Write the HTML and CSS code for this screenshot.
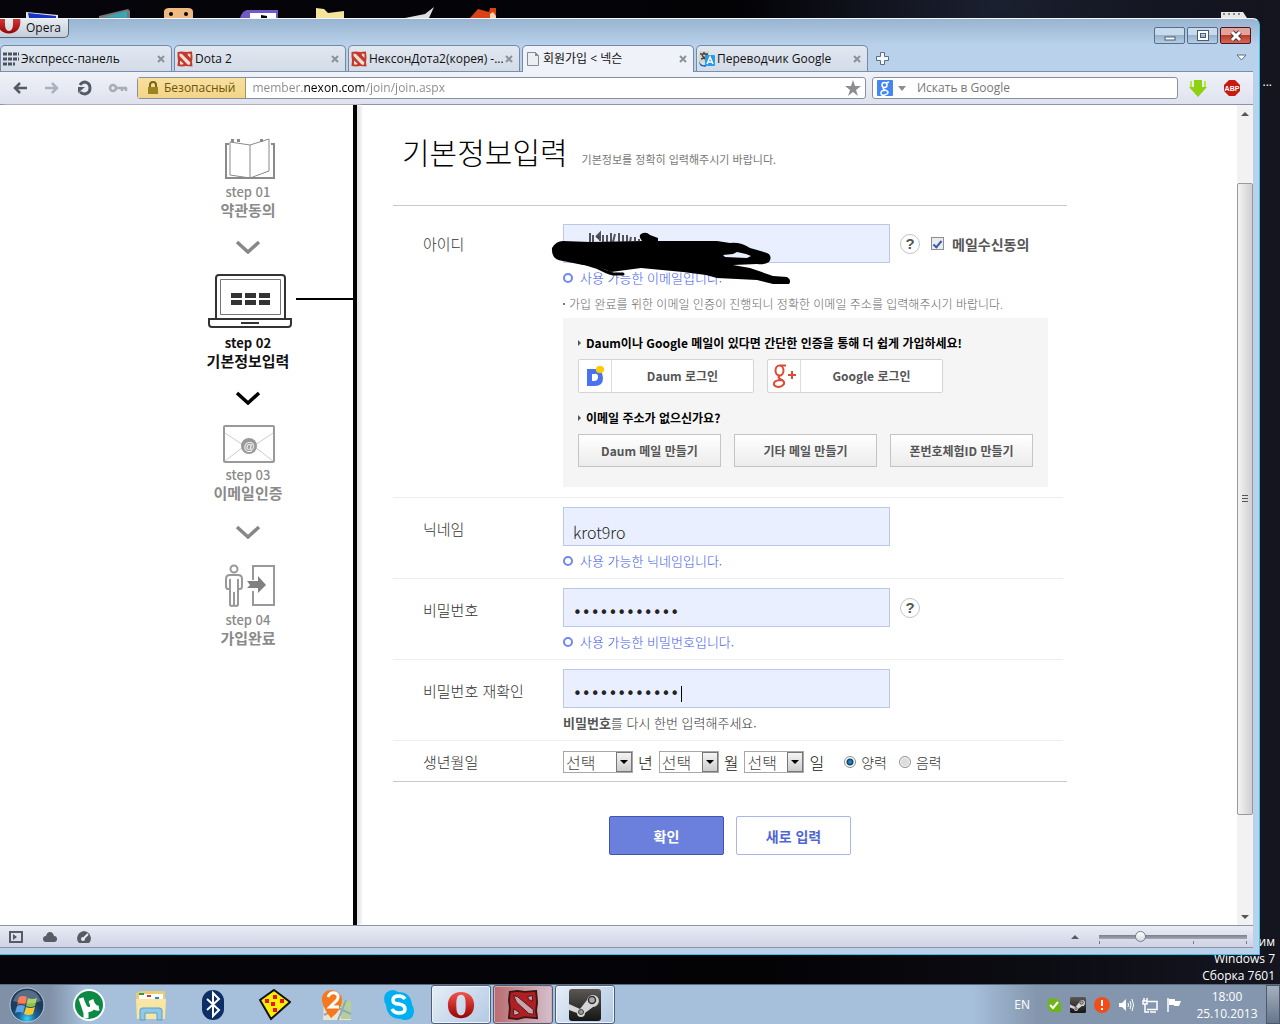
FILE: index.html
```html
<!DOCTYPE html>
<html lang="ko">
<head>
  <meta charset="UTF-8">
  <title>회원가입 &lt; 넥슨</title>
  <link rel="stylesheet" href="styles.css">
</head>
<body>

  <!-- shared icons -->
  <svg class="defs" aria-hidden="true">
    <symbol id="i-dota" viewBox="0 0 32 32">
      <path d="M1 2l8-1 9 1 12-1 1 12-1 9 1 9-13-1-8 1-9-1 1-11-1-8z" fill="#c43a2a"/>
      <path d="M5 5l5 1 17 17-2 5-4-1L5 10zM21 5l6 1v8l-5-5zM6 19l7 6-1 2H6z" fill="#f0dcd8"/>
    </symbol>
    <symbol id="i-dota-dark" viewBox="0 0 32 32">
      <path d="M2 2l8-1 8 1 12-1 1 12-1 9 1 8-13-1-8 2-9-1 1-11-1-8z" fill="#b01f22" stroke="#3c1517" stroke-width="2"/>
      <path d="M6 6l4 1 17 14v5l-5-1L9 13zM21 7l5-1v6l-4-2zM6 20l6 4-1 2-5 1z" fill="#c9a3ad" stroke="#4a1719"/>
    </symbol>
    <symbol id="i-opera" viewBox="0 0 32 32">
      <path fill="url(#red)" fill-rule="evenodd" d="M16 2C7 2 2 8 2 16s5 14 14 14 14-6 14-14S25 2 16 2zm0 3c4 0 5 4 5 11s-1 11-5 11-5-4-5-11 1-11 5-11z"/>
    </symbol>
    <symbol id="i-steam" viewBox="0 0 32 32">
      <rect width="32" height="32" rx="3" fill="url(#dark)"/>
      <path d="M0 15l11 5 7-9a6 6 0 1 1 6 7l-8 6a4 4 0 0 1-8 0L0 21z" fill="#d5d5d5"/>
      <circle cx="23" cy="11" r="3.500" fill="#aaa" stroke="#333" stroke-width="1.500"/>
      <circle cx="12" cy="23" r="2.500" fill="#999" stroke="#444"/>
    </symbol>
    <symbol id="i-close" viewBox="0 0 8 8"><path d="M1 1l6 6M7 1L1 7" stroke="#8a929e" stroke-width="2"/></symbol>
    <symbol id="i-chevron" viewBox="0 0 26 14"><path d="M2 2l11 10L24 2" fill="none" stroke="currentColor" stroke-width="3.500"/></symbol>
    <linearGradient id="red" x2="0" y2="1"><stop stop-color="#f4544c"/><stop offset="1" stop-color="#980404"/></linearGradient>
    <linearGradient id="dark" x2="0" y2="1"><stop stop-color="#5b5753"/><stop offset="1" stop-color="#151515"/></linearGradient>
    <radialGradient id="orb" cx=".5" cy=".9"><stop stop-color="#37d5ff"/><stop offset=".5" stop-color="#1c6299"/><stop offset="1" stop-color="#1e3c5c"/></radialGradient>
  </svg>

  <!-- desktop icons above the window -->
  <div class="desktop-top">
    <svg width="600" height="18" viewBox="0 0 600 18">
      <path d="M26 12l32 3v3H26z" fill="#e6e6e6"/><path d="M28 13l28 3v2H29z" fill="#1232c8"/>
      <path d="M99 16l29-7 2 2v7H99z" fill="#777"/><path d="M104 17l23-6v7z" fill="#35a9b8"/>
      <path d="M164 18v-7q1-3 5-3h19q5 0 5 4v6z" fill="#efb981"/><circle cx="171" cy="14" r="2"/><circle cx="186" cy="14" r="2"/>
      <path d="M240 18q2-7 7-8h31v8z" fill="#7459c4"/><path d="M250 13h26v5h-26z" fill="#fff"/><path d="M261 15l6 1v2h-6z"/>
      <path d="M316 8l8 1 4 4 16-2v7h-28z" fill="#f5e59a"/>
      <path d="M405 18l20-4 9-7-5 11z" fill="#ddd"/>
      <path d="M470 18l8-9 11 3 1-4h6v10z" fill="#d94316"/><path d="M490 14l3-2 3 4v2h-6z" fill="#f3d2b0"/>
    </svg>
    <svg width="28" height="18" viewBox="0 0 28 18"><path d="M1 12h22l4 6H1z" fill="#e7e7e7"/><path d="M3 14h20" stroke="#888" stroke-width="2" stroke-dasharray="2 3"/></svg>
  </div>
  <span class="desktop-label">...</span>
  <p class="watermark">им<br>Windows 7<br>Сборка 7601</p>

  <!-- browser window -->
  <div class="window">
    <div class="titlebar">
      <button class="opera-menu"><svg width="26" height="26"><use href="#i-opera"/></svg>Opera</button>
      <div class="win-buttons">
        <button aria-label="Minimize"><svg width="12" height="12"><rect x="1" y="7" width="10" height="3" fill="#fff" stroke="#4a5a70"/></svg></button>
        <button aria-label="Restore"><svg width="12" height="12"><path d="M2 2h8v7H2z" fill="none" stroke="#4a5a70" stroke-width="4"/><path d="M2 2h8v7H2z" fill="none" stroke="#fff" stroke-width="2"/></svg></button>
        <button class="win-close" aria-label="Close"><svg width="12" height="12"><path d="M2 2l8 8M10 2l-8 8" stroke="#5a3038" stroke-width="5"/><path d="M2 2l8 8M10 2l-8 8" stroke="#fff" stroke-width="3"/></svg></button>
      </div>
    </div>

    <div class="tabs">
      <div class="tab">
        <svg width="16" height="16"><path d="M0 3h16M0 8h16M0 13h12" stroke="#4b5260" stroke-width="3" stroke-dasharray="4 1"/></svg>
        <span>Экспресс-панель</span>
        <button aria-label="Close tab"><svg width="8" height="8"><use href="#i-close"/></svg></button>
      </div>
      <div class="tab">
        <svg width="16" height="16"><use href="#i-dota"/></svg>
        <span>Dota 2</span>
        <button aria-label="Close tab"><svg width="8" height="8"><use href="#i-close"/></svg></button>
      </div>
      <div class="tab">
        <svg width="16" height="16"><use href="#i-dota"/></svg>
        <span>НексонДота2(корея) -...</span>
        <button aria-label="Close tab"><svg width="8" height="8"><use href="#i-close"/></svg></button>
      </div>
      <div class="tab active">
        <svg width="16" height="16"><path d="M2.500 1.500h8l3 3v10h-11z" fill="#eceef2" stroke="#858c98"/><path d="M10 1v4h4" fill="#858c98"/></svg>
        <span>회원가입 &lt; 넥슨</span>
        <button aria-label="Close tab"><svg width="8" height="8"><use href="#i-close"/></svg></button>
      </div>
      <div class="tab">
        <svg width="16" height="16"><rect width="10" height="11" rx="1" fill="#d7d7c9"/><path d="M1 3h8M5 1v2M2 8q5-1 6-5M3 4q2 4 5 5" fill="none" stroke="#444" stroke-width="1.500"/><rect x="6" y="4" width="10" height="11" rx="1" fill="#2b9be6"/><path d="M8 13l3-7 3 7M9 11h4" fill="none" stroke="#fff" stroke-width="1.500"/><path d="M0 9q1 6 6 5l1 2-5-1q-2-2-2-6" fill="#1457b5"/></svg>
        <span>Переводчик Google</span>
        <button aria-label="Close tab"><svg width="8" height="8"><use href="#i-close"/></svg></button>
      </div>
      <button class="new-tab" aria-label="New tab"><svg width="13" height="13"><path d="M4.500.500h4v4h4v4h-4v4h-4v-4h-4v-4h4z" fill="#f4f8fc" stroke="#5d6c80"/></svg></button>
      <button class="tab-list" aria-label="Tabs"><svg width="11" height="8"><path d="M1 1h9L5.500 6z" fill="#fff" stroke="#5d6c80"/></svg></button>
    </div>

    <div class="toolbar">
      <nav>
        <button aria-label="Back"><svg width="16" height="16"><path d="M15 8H3M8 3L3 8l5 5" fill="none" stroke="#555b66" stroke-width="2.500"/></svg></button>
        <button aria-label="Forward"><svg width="16" height="16"><path d="M1 8h12M8 3l5 5-5 5" fill="none" stroke="#adb1bc" stroke-width="2.500"/></svg></button>
        <button aria-label="Reload"><svg width="16" height="16"><path d="M4 5q2-3 5-3 5 1 5 6t-5 6q-3 0-5-2" fill="none" stroke="#555b66" stroke-width="3"/><path d="M2 13V7h7z" fill="#555b66"/></svg></button>
        <button aria-label="Password"><svg width="20" height="16"><circle cx="5" cy="8" r="3" fill="none" stroke="#a8acb8" stroke-width="2.500"/><path d="M8 8h11M14 8v3M18 8v3" stroke="#a8acb8" stroke-width="2.500"/></svg></button>
      </nav>
      <div class="address">
        <button class="secure"><svg width="10" height="14"><path d="M2 6V4q0-3 3-3t3 3v2" fill="none" stroke="#776514" stroke-width="2"/><rect y="6" width="10" height="7" fill="#9b8420"/></svg>Безопасный</button>
        <input class="url" type="text" value="member.nexon.com/join/join.aspx" aria-label="Address">
        <button class="star" aria-label="Bookmark"><svg width="16" height="16"><path d="M8 0l2 6h6l-5 4 2 6-5-4-5 4 2-6-5-4h6z" fill="#8b8d93"/></svg></button>
      </div>
      <div class="search">
        <svg width="16" height="16"><rect width="16" height="16" rx="1" fill="#4285f4"/><g fill="none" stroke="#fff" stroke-width="1.500"><circle cx="7.500" cy="5" r="2.500"/><path d="M9 3l3-1M7 8q-2 1 1 2 3 1 3 2.500T7.500 15 4 13t4-2.500"/></g></svg>
        <svg width="8" height="5"><path d="M0 0h8L4 5z" fill="#8b8d93"/></svg>
        <input type="text" placeholder="Искать в Google" aria-label="Search">
      </div>
      <button class="ext" aria-label="Download"><svg width="18" height="18"><path d="M5 1h8v7h5l-9 10-9-10h5z" fill="#8fd010"/><path d="M2 2v6M16 2v6" stroke="#b5ea3c" stroke-width="2"/></svg></button>
      <button class="ext" aria-label="Adblock"><svg width="16" height="16"><path d="M5 0h6l5 5v6l-5 5H5l-5-5V5z" fill="#c81a10"/><text x="8" y="11" class="abp">ABP</text></svg></button>
    </div>

    <div class="view">
      <aside class="steps">
        <div class="step">
          <svg width="56" height="42" viewBox="-4 0 56 42"><g fill="none" stroke="#8a8a8a"><path d="M5 6H2v34h48V6h-3" stroke-width="2"/><path d="M6 4l20 3 19-6v32l-19 7-20-3zM26 7v33"/></g><path d="M7 1h3v3H7zM13 1h3v3h-3zM36 1h3v3h-3z" fill="#8a8a8a"/></svg>
          <span>step 01</span><strong>약관동의</strong>
        </div>
        <svg class="arrow" width="26" height="14"><use href="#i-chevron"/></svg>
        <div class="step current">
          <div class="step-link">
            <svg width="88" height="57" viewBox="0 0 88 57"><g fill="none" stroke="#333" stroke-width="2"><path d="M12 45V4q0-3 3-3h63q3 0 3 3v41M5 45h82v5q0 3-3 3H8q-3 0-3-3z"/><path d="M37 49h18"/><path d="M16.500 5.500h60v35h-60z" stroke-width="1" stroke="#777"/></g><path d="M27 19h11v5H27zM41 19h11v5H41zM55 19h11v5H55zM27 26h11v5H27zM41 26h11v5H41zM55 26h11v5H55z" fill="#333"/></svg>
          </div>
          <span>step 02</span><strong>기본정보입력</strong>
        </div>
        <svg class="arrow current" width="26" height="14"><use href="#i-chevron"/></svg>
        <div class="step">
          <svg width="54" height="38" viewBox="-2 0 54 38"><rect x="1" y="1" width="50" height="36" rx="1" fill="none" stroke="#999" stroke-width="2"/><path d="M2 8l24 16L50 8M2 36l18-14M50 36L32 22" fill="none" stroke="#ccc"/><circle cx="26" cy="21" r="8" fill="#999"/><text x="26" y="25" class="at">@</text></svg>
          <span>step 03</span><strong>이메일인증</strong>
        </div>
        <svg class="arrow" width="26" height="16"><use href="#i-chevron" y="2" height="14"/></svg>
        <div class="step">
          <svg width="56" height="49" viewBox="-4 0 56 49"><g fill="none" stroke="#999" stroke-width="2"><circle cx="10" cy="10" r="3.500"/><path d="M6 30H4q-2 0-2-3v-7q0-4 4-4h8q4 0 4 4v7q0 3-2 3h-2M6 20v26q2 2 4 0V33v13q2 2 4 0V20"/><path d="M29 21V7h21v39H29V32"/></g><path d="M23 22h11v-5l8 9-8 8v-5H23l3-3z" fill="#808080"/></svg>
          <span>step 04</span><strong>가입완료</strong>
        </div>
      </aside>

      <main>
        <header>
          <h1>기본정보입력</h1>
          <p>기본정보를 정확히 입력해주시기 바랍니다.</p>
        </header>

        <form class="join">
          <div class="rows">
            <div class="row first">
              <label class="name" for="userid">아이디</label>
              <div class="field">
                <div class="line">
                  <input class="text" type="text" id="userid">
                  <button type="button" class="help">?</button>
                  <label class="agree"><input type="checkbox" checked>메일수신동의</label>
                </div>
                <p class="ok">사용 가능한 이메일입니다.</p>
                <p class="note">가입 완료를 위한 이메일 인증이 진행되니 정확한 이메일 주소를 입력해주시기 바랍니다.</p>
                <svg class="scribble" width="240" height="56" viewBox="0 0 240 56">
                  <path d="M1 16Q5 9 12 9L39 10 91 9Q87 4 90 2 95-1 99 3L107 6V9H166L179 11Q190 10 199 16L216 21Q222 24 218 30 214 33 206 32L182 33 199 36 222 44 236 45Q241 48 238 52L222 52 206 48 166 46 155 43 132 40 90 36 60 40 45 34 32 33 12 29Q0 28 1 16z"/>
                  <path d="M29 30l16 5 11 5 6 2h10" fill="none" stroke="#000" stroke-width="3" stroke-linecap="round"/>
                  <path d="M172 23l10-1 4-2 9 2 5 2-4 2-22-1z" fill="#e9effe"/>
                  <path d="M39 1v9M42 3v7M45 5l4-4v8M52 3v7M56 3v7M60 1v9M64 2l-2 8M68 1v9M72 3v7M76 3v7M80 5l-1 5M84 5v5M88 7v3" stroke="#222" stroke-width="2" opacity=".75"/>
                </svg>
                <div class="panel">
                  <h2>Daum이나 Google 메일이 있다면 간단한 인증을 통해 더 쉽게 가입하세요!</h2>
                  <div class="buttons">
                    <button type="button" class="social"><i><svg width="18" height="22" viewBox="0 0 18 22"><path fill="#4a72f0" fill-rule="evenodd" d="M1 4h8q8 1 8 9t-8 8H1zm5 5v7h2q4 0 4-4t-4-3z"/><path d="M12 1h4l2 2v3l-2 2h-4l-2-2V3z" fill="#fc0"/></svg></i><span>Daum 로그인</span></button>
                    <button type="button" class="social"><i><svg width="24" height="24" viewBox="0 0 24 24"><g fill="none" stroke="#dc4a38" stroke-width="2"><ellipse cx="7.500" cy="6.500" rx="4" ry="5"/><path d="M8 1.500h6M8 12q-3 1 0 3 5 2 4 5-2 3-6 3-5-1-4-4 1-3 8-3M16 11h8M20 7v8"/></g></svg></i><span>Google 로그인</span></button>
                  </div>
                  <h2>이메일 주소가 없으신가요?</h2>
                  <div class="buttons">
                    <button type="button" class="make">Daum 메일 만들기</button>
                    <button type="button" class="make">기타 메일 만들기</button>
                    <button type="button" class="make">폰번호체험ID 만들기</button>
                  </div>
                </div>
              </div>
            </div>

            <div class="row">
              <label class="name" for="nick">닉네임</label>
              <div class="field">
                <input class="text" type="text" id="nick" value="krot9ro">
                <p class="ok">사용 가능한 닉네임입니다.</p>
              </div>
            </div>

            <div class="row">
              <label class="name" for="pw">비밀번호</label>
              <div class="field">
                <div class="line">
                  <input class="text" type="password" id="pw" value="123456789012">
                  <button type="button" class="help">?</button>
                </div>
                <p class="ok">사용 가능한 비밀번호입니다.</p>
              </div>
            </div>

            <div class="row">
              <label class="name" for="pw2">비밀번호 재확인</label>
              <div class="field">
                <input class="text" type="password" id="pw2" value="123456789012">
                <span class="caret"></span>
                <p class="hint"><b>비밀번호</b>를 다시 한번 입력해주세요.</p>
              </div>
            </div>

            <div class="row birth">
              <span class="name">생년월일</span>
              <div class="line">
                <span class="select year"><select id="year"><option>선택</option></select></span><label for="year">년</label>
                <span class="select"><select id="month"><option>선택</option></select></span><label for="month">월</label>
                <span class="select"><select id="day"><option>선택</option></select></span><label for="day">일</label>
                <label class="cal"><input type="radio" name="cal" checked>양력</label>
                <label class="cal"><input type="radio" name="cal">음력</label>
              </div>
            </div>
          </div>

          <div class="actions">
            <button type="submit" class="confirm">확인</button>
            <button type="reset" class="reset">새로 입력</button>
          </div>
        </form>
      </main>

      <div class="scrollbar">
        <button aria-label="Up"><svg width="8" height="4"><path d="M4 0l4 4H0z" fill="#555"/></svg></button>
        <div class="track"><div class="thumb"></div></div>
        <button aria-label="Down"><svg width="8" height="4"><path d="M0 0h8L4 4z" fill="#555"/></svg></button>
      </div>
    </div>

    <div class="statusbar">
      <button aria-label="Panels"><svg width="14" height="12"><rect x="1" y="1" width="12" height="10" fill="none" stroke="#565b66" stroke-width="2"/><path d="M4 3l4 3-4 3z" fill="#565b66"/></svg></button>
      <button aria-label="Link"><svg width="14" height="12"><path d="M3 11q-3 0-3-3t3-3q1-4 4-4t4 4q3 0 3 3t-3 3z" fill="#565b66"/></svg></button>
      <button aria-label="Turbo"><svg width="14" height="12"><path d="M2 12q-2-2-2-5 1-6 7-7 6 1 7 7 0 3-2 5z" fill="#565b66"/><path d="M6 8l5-5" stroke="#e8eaf4" stroke-width="2"/><circle cx="6" cy="8" r="2" fill="#e8eaf4"/></svg></button>
      <button class="up" aria-label="Zoom menu"><svg width="8" height="4"><path d="M4 0l4 4H0z" fill="#565b66"/></svg></button>
      <input type="range" class="zoom" value="26" aria-label="Zoom">
    </div>
  </div>

  <!-- taskbar -->
  <footer class="taskbar">
    <button class="start" aria-label="Start"><svg width="36" height="36" viewBox="0 0 36 36"><circle cx="18" cy="18" r="17" fill="url(#orb)" stroke="#b4c9de"/><path d="M10 10q4-2 8 0l-2 8q-4-2-8 0z" fill="#f0562a"/><path d="M19 11q4 2 9 0l-2 8q-4 2-9 0z" fill="#8fc33e"/><path d="M8 19q4-2 8 0l-2 7q-4-2-8 0z" fill="#5aa5e6"/><path d="M17 20q4 2 9 0l-2 7q-4 2-9 0z" fill="#fbc52d"/><path d="M4 14Q8 3 18 3t14 11q-12 5-28 0" fill="#fff" opacity=".25"/></svg></button>
    <button aria-label="uTorrent"><svg width="32" height="32"><circle cx="16" cy="16" r="16" fill="#fff"/><circle cx="16" cy="16" r="14" fill="#0c8a43"/><path d="M8 9l5 15v5M10 14q2 8 8 6 3-2 0-9M18 12q3 8 8 7" fill="none" stroke="#fff" stroke-width="5"/></svg></button>
    <button aria-label="Explorer"><svg width="32" height="32"><path d="M1 4l5-2h24v26H2z" fill="#e9cd74"/><path d="M4 5h24v5H4z" fill="#fff"/><path d="M4 4h5v2H4z" fill="#2a9c45"/><path d="M12 6h4v2h-4z" fill="#d23b2a"/><path d="M20 8h4v2h-4z" fill="#2b83d6"/><path d="M1 10h30l-1 20H2z" fill="#f7e6a4"/><path d="M5 31V21q0-2 3-2h16q3 0 3 2v10h-5v-7H10v7z" fill="#8fc8e8" stroke="#5d9fc6"/></svg></button>
    <button aria-label="Bluetooth"><svg width="24" height="32"><rect x="1" y="1" width="22" height="30" rx="11" fill="#0b2e66"/><path d="M6 10l12 11-6 6V4l6 6L6 21" fill="none" stroke="#fff" stroke-width="2"/></svg></button>
    <button aria-label="Kite"><svg width="32" height="32"><path d="M15 1l16 12-19 17L1 11z" fill="#fbf005" stroke="#111" stroke-width="2"/><path d="M14 6h4v4h-4zM6 10h4v4H6zM21 10h4v4h-4zM12 13h4v4h-4zM14 19h4v4h-4z" fill="#f01010"/></svg></button>
    <button aria-label="2GIS"><svg width="32" height="32"><path d="M3 12h27v19H2z" fill="#e8e6d4"/><path d="M20 11l10 1v18H20z" fill="#b5cf9a"/><path d="M17 31l8-20M3 26l14-7 13 6" stroke="#8ea8bf" stroke-width="2" fill="none"/><path d="M10 1Q0 2 1 12q2 9 9 17 10-7 11-17Q21 2 10 1z" fill="#f7781c"/><path d="M7 8q2-5 7-4 5 2 2 7l-7 7h9" fill="none" stroke="#fff" stroke-width="3"/></svg></button>
    <button aria-label="Skype"><svg width="30" height="30"><path d="M8 0q4 0 6 2 13 0 14 13 2 2 2 7-1 8-9 8-3 0-4-1Q3 29 2 15 0 12 0 8 1 1 8 0" fill="#00aff0"/><path d="M21 9q-2-3-6-3-6 0-6 4t6 4q6 1 6 5t-6 4q-5 0-7-4" fill="none" stroke="#fff" stroke-width="3.500"/></svg></button>
    <button class="task" aria-label="Opera"><svg width="30" height="30"><use href="#i-opera"/></svg></button>
    <button class="task alert" aria-label="Dota 2"><svg width="30" height="30"><use href="#i-dota-dark"/></svg></button>
    <button class="task" aria-label="Steam"><svg width="32" height="32"><use href="#i-steam"/></svg></button>

    <div class="tray">
      <span class="lang">EN</span>
      <svg width="16" height="16"><path d="M3 1l9 1 3 4v9l-10 0-4-5z" fill="#6fb51a"/><path d="M4 8l3 3 5-6" fill="none" stroke="#fff" stroke-width="2"/></svg>
      <svg width="16" height="16"><use href="#i-steam"/></svg>
      <svg width="16" height="16"><circle cx="8" cy="8" r="8" fill="#f04e16"/><path d="M8 3v6M8 11v2" stroke="#fff" stroke-width="2"/></svg>
      <svg width="16" height="16"><path d="M1 6h3l4-4v12l-4-4H1z" fill="#fff"/><path d="M10 6q1 2 0 4M12 4q2 4 0 8M14 2q3 6 0 12" fill="none" stroke="#fff"/></svg>
      <svg width="16" height="16"><path d="M5 4.500h10v8H5M8 15h6M2 1v3M5 1v3M1 4h4v3H1zM3 7v8h4" fill="none" stroke="#fff" stroke-width="1.500"/></svg>
      <svg width="16" height="16"><path d="M2 1v14" stroke="#fff" stroke-width="1.500"/><path d="M3 2h6v2h6l-2 5H8V8H3z" fill="#fff"/></svg>
      <div class="clock">18:00<br>25.10.2013</div>
      <button class="show-desktop" aria-label="Show desktop"></button>
    </div>
  </footer>

</body>
</html>
```
FILE: styles.css
```css
/* ─── common ─── */
*, *::before, *::after { box-sizing: border-box; margin: 0; padding: 0; }
body {
  position: relative;
  min-height: 100vh;
  display: flex; flex-direction: column;
  background: radial-gradient(circle at 1000px 0, #1b2030, transparent 260px), linear-gradient(90deg, #05050b 0%, #030306 60%, #14151f 100%);
  font: 12px/16px "Open Sans", "Noto Sans CJK KR", sans-serif;
  color: #111;
}
button { border: none; background: none; font: inherit; color: inherit; cursor: pointer; }
input, select { font: inherit; color: inherit; }
svg { display: block; flex: none; }
.defs { position: absolute; width: 0; height: 0; }

/* ─── desktop ─── */
.desktop-top { display: flex; justify-content: space-between; height: 18px; padding-right: 32px; overflow: hidden; }
.desktop-label { position: absolute; right: 8px; top: 74px; color: #fff; }
.watermark {
  position: absolute; right: 5px; bottom: 40px;
  color: #fff; line-height: 17px; text-align: right;
}

/* ─── window ─── */
.window {
  position: relative;
  flex: 1;
  display: flex; flex-direction: column;
  margin: 0 20px 29px 0;
  padding: 0 6px 6px 0;
  border: solid #35c5e6; border-width: 0 1px 1px 0;
  border-top: 1px solid #f2f7fb;
  border-radius: 0 7px 0 0;
  background: linear-gradient(#98b4d0, #b9d1ea 26px, #b9d1ea);
}
.titlebar { display: flex; justify-content: space-between; height: 26px; }
.opera-menu {
  display: flex; align-items: center; gap: 4px;
  width: 69px; height: 19px; overflow: hidden;
  border: 1px solid #566475; border-width: 0 1px 1px 0; border-radius: 0 0 5px 0;
  background: linear-gradient(#e8ecf1, #c3cdda);
}
.opera-menu svg { margin: -12px 0 0 -4px; }
.win-buttons { display: flex; gap: 2px; padding: 8px 2px 0 0; }
.win-buttons button {
  display: flex; align-items: center; justify-content: center;
  width: 31px; height: 17px;
  border: 1px solid #586f8c; border-radius: 2px;
  background: linear-gradient(#c9daec 45%, #98b3cf 50%, #b5cde6);
}
.win-buttons .win-close { border-color: #54141c; background: linear-gradient(#e2a59d 45%, #bb3c28 50%, #cf6a58); }

.tabs { display: flex; align-items: center; gap: 2px; height: 27px; border-bottom: 1px solid #7b8fa8; }
.tab {
  display: flex; align-items: center; gap: 2px;
  flex: 0 1 172px; min-width: 0; height: 26px; padding: 0 6px 0 2px;
  border: 1px solid #7689a3; border-bottom: 0; border-radius: 5px 5px 0 0;
  background: linear-gradient(#e2e8f1, #d3dbe8);
}
.tab.active { height: 27px; margin-bottom: -1px; background: #f0f2f9; }
.tab span { flex: 1; min-width: 0; white-space: nowrap; overflow: hidden; }
.new-tab { padding: 0 6px; }
.tab-list { margin-left: auto; padding-right: 6px; }

.toolbar {
  display: flex; align-items: center; gap: 6px;
  height: 33px; padding: 0 7px 0 12px;
  background: linear-gradient(#f0f2f9, #dfe1ee);
  border-bottom: 1px solid #8c93a6;
}
.toolbar nav { display: flex; gap: 16px; width: 119px; }
.address, .search { display: flex; align-items: center; height: 22px; border: 1px solid #8a8fa0; border-radius: 3px; background: #fff; }
.address { flex: 1; }
.search { flex: 0 1 306px; gap: 5px; padding: 0 4px; }
.address input, .search input { flex: 1; min-width: 0; border: 0; outline: 0; background: none; color: #777; }
.search input { padding-left: 6px; }
.search input::placeholder { color: #777; }
.secure {
  display: flex; align-items: center; gap: 6px;
  height: 20px; padding: 0 10px;
  border-right: 1px solid #a39468;
  background: linear-gradient(#f8e0a0, #f3d587); color: #6c5410;
}
.address .url {
  padding-left: 6px;
  color: transparent;
  background: linear-gradient(90deg, #888 58px, #000 58px, #000 118px, #888 118px);
  -webkit-background-clip: text; background-clip: text;
}
.star { padding: 0 4px; }
.ext { display: flex; justify-content: center; width: 28px; }
.abp { font: bold 7px "Liberation Sans", sans-serif; fill: #fff; text-anchor: middle; }

/* ─── page ─── */
.view { flex: 1; display: flex; background: #fff; font-family: "Noto Sans CJK KR", sans-serif; }
.steps {
  flex: 0 0 357px;
  padding: 33px 0 33px 143px;
  border-right: 4px solid #000;
  box-shadow: 4px 0 3px #e4e4e4;
  display: flex; flex-direction: column; align-items: stretch; gap: 20px;
}
.step { display: flex; flex-direction: column; align-items: center; color: #8a8a8a; text-align: center; }
.step span { margin-top: 4px; font-size: 13px; line-height: 16px; font-weight: 500; }
.step strong { font-size: 15px; line-height: 20px; }
.step.current { color: #111; }
.step.current span { font-weight: bold; }
.step-link { display: grid; grid-template-columns: 1fr auto 1fr; align-self: stretch; }
.step-link svg { grid-column: 2; }
.step-link::after { content: ""; height: 2px; margin: 24px 0 0 4px; background: #000; }
.arrow { align-self: center; color: #888; }
.arrow.current { color: #000; }
.at { font: bold 11px "Liberation Sans", sans-serif; fill: #fff; text-anchor: middle; }

main { flex: 1; padding: 0 36px; }
main header, .join { max-width: 674px; }
main header { display: flex; align-items: baseline; gap: 14px; height: 100px; padding: 26px 9px 0; }
main h1 { font-size: 30px; line-height: 40px; font-weight: 300; color: #000; }
main header p { font-size: 11px; color: #777; }

.rows { border: solid #c8c8c8; border-width: 1px 0; }
.row { display: flex; margin-right: 4px; padding: 9px 0; border-top: 1px solid #ededed; }
.row.first { padding-top: 18px; border-top: 0; }
.name { width: 170px; padding: 2px 0 0 30px; font-size: 15px; line-height: 39px; font-weight: 300; color: #333; }
.first .name { padding-top: 0; }
.field { position: relative; flex: 1; }
.line { display: flex; align-items: center; }
.text {
  display: block;
  width: 327px; height: 39px; padding: 10px 9px 0;
  border: 1px solid #bcc8ea; outline: 0;
  background: #e9effe; color: #222;
  font-size: 16px; font-weight: 300;
}
.text[type=password] { font: 15px "DejaVu Sans", sans-serif; }
.caret { position: absolute; left: 118px; top: 17px; width: 1px; height: 16px; background: #000; }
.help {
  width: 20px; height: 20px; margin: 0 11px 0 10px;
  border: 1px solid #c4c4c4; border-radius: 50%;
  font: bold 15px/18px "Liberation Sans", sans-serif; color: #555;
}
.agree { display: flex; align-items: center; gap: 8px; font-size: 14px; font-weight: bold; color: #555; }
.agree input {
  appearance: none;
  width: 13px; height: 13px;
  border: 1px solid #8e8f8f; background: #e8ecf2;
  display: grid; place-items: center;
}
.agree input:checked::before {
  content: ""; width: 5px; height: 9px;
  border: solid #3c5ba0; border-width: 0 2px 2px 0; transform: rotate(40deg);
}
.ok, .hint { margin-top: 7px; font-size: 13px; line-height: 16px; font-weight: 300; color: #333; }
.hint b { font-weight: bold; color: #555; }
.ok { display: flex; align-items: center; gap: 7px; color: #4059ee; }
.ok::before { content: ""; width: 10px; height: 10px; border: 2px solid #7186ee; border-radius: 50%; }
.note { margin: 10px 0 6px; font-weight: 300; color: #666; display: flex; align-items: center; gap: 4px; white-space: nowrap; }
.note::before { content: ""; width: 2px; height: 2px; background: #777; }
.scribble { position: absolute; left: -12px; top: 8px; overflow: visible; }

.panel { width: 485px; padding: 16px 15px 20px; margin-bottom: 1px; background: #f5f5f5; }
.panel h2 { display: flex; align-items: center; gap: 5px; margin-bottom: 7px; font-size: 12px; line-height: 18px; color: #000; }
.panel h2::before { content: ""; border: 3px solid transparent; border-left-color: #555; border-right: 0; }
.panel h2:not(:first-child) { margin-top: 16px; }
.buttons { display: flex; gap: 13px; }
.buttons button { font-weight: bold; color: #555; border: 1px solid #d4d4d4; background: #fff; }
.social { display: flex; align-items: center; width: 176px; height: 34px; border-radius: 2px; }
.social i { display: grid; place-items: center; width: 33px; height: 32px; border-right: 1px solid #ddd; }
.social span { flex: 1; }
.buttons .make { width: 143px; height: 33px; border-color: #c4c4c4; background: linear-gradient(#fff, #ececec); }

.birth { padding: 10px 0 8px; }
.birth .name { padding-top: 0; line-height: 22px; }
.birth .line { font-size: 16px; line-height: 22px; font-weight: 300; }
.birth .line > label { margin: 0 6px 0 5px; }
.select { position: relative; display: block; width: 60px; }
.select.year { width: 70px; }
.select select {
  appearance: none; display: block;
  width: 100%; height: 22px; padding: 0 2px;
  border: 1px solid #a8a8a8; border-radius: 0; background: #fff; color: #444; line-height: 20px;
}
.select::before {
  content: ""; position: absolute; right: 1px; top: 1px; width: 16px; height: 20px;
  border: 1px solid #777; background: linear-gradient(#f4f4f4, #ccc); pointer-events: none;
}
.select::after {
  content: ""; position: absolute; right: 5px; top: 9px;
  border: 4px solid transparent; border-top-color: #000; border-bottom: 0; pointer-events: none;
}
.birth .line > .cal { display: flex; align-items: center; gap: 5px; margin: 0 0 0 12px; font-size: 14px; color: #333; }
.birth .line > label:not(.cal) + .cal { margin-left: 14px; }
.cal input { appearance: none; width: 12px; height: 12px; border: 1px solid #8e8f8f; border-radius: 50%; background: #ddd; box-shadow: inset 0 0 0 1px #fff; }
.cal input:checked { background: radial-gradient(#1d8cc8 0 1px, #123c5c 3px, #e8f2f8 4px); }

.actions { display: flex; justify-content: center; gap: 12px; margin-top: 34px; }
.actions button { width: 115px; height: 39px; border: 1px solid #aab6ea; border-radius: 2px; font-size: 14px; font-weight: bold; }
.actions .confirm { background: #6b80dc; border-color: #3f54b4; color: #fff; }
.actions .reset { background: #fff; color: #4f66d2; }

.scrollbar { display: flex; flex-direction: column; width: 16px; background: #f2f2f2; }
.scrollbar button { display: grid; place-items: center; height: 17px; }
.track { flex: 1; display: grid; grid-template-rows: 61fr 632fr 93fr; }
.thumb {
  grid-row: 2; border: 1px solid #999; border-radius: 2px;
  background: repeating-linear-gradient(#555 0 1px, transparent 1px 3px) center / 6px 8px no-repeat, linear-gradient(90deg, #f4f4f4, #cfcfd2);
}

.statusbar {
  display: flex; align-items: center; gap: 20px;
  height: 23px; padding: 0 6px 0 9px;
  border: solid #8d94a4; border-width: 1px 0;
  background: linear-gradient(#e9ebf5, #cfd3e4);
}
.statusbar .up { margin-left: auto; }
.zoom {
  appearance: none; width: 148px; height: 14px;
  background:
    linear-gradient(#777c8a, #777c8a) 0 100% / 1px 3px no-repeat,
    linear-gradient(#777c8a, #777c8a) 64% 100% / 1px 3px no-repeat,
    linear-gradient(#777c8a, #777c8a) 100% 100% / 1px 3px no-repeat,
    linear-gradient(#7b7f8c, #a4a8b6) center / 100% 4px no-repeat;
}
.zoom::-webkit-slider-thumb {
  appearance: none; width: 11px; height: 11px;
  border: 1px solid #777c8a; border-radius: 50%; background: linear-gradient(#fff, #d5d8e2);
}

/* ─── taskbar ─── */
.taskbar {
  position: relative;
  display: flex; gap: 2px; height: 40px;
  border-top: 1px solid #5c6b7e;
  background: linear-gradient(90deg, #8091a7 50px, #a6bfdb 84px, #a6bfdb 76%, #8496ad 81%);
}
.taskbar > button { display: flex; align-items: center; justify-content: center; width: 60px; }
.taskbar > .start { width: 57px; padding-right: 3px; }
.taskbar .task {
  border: 1px solid #4d5f78; border-radius: 3px;
  box-shadow: inset 0 0 0 1px #eef4fa;
  background: linear-gradient(135deg, #e6eef7, #b2c9e3);
}
.taskbar .alert { box-shadow: inset 0 0 0 1px #d8a9ae; background: linear-gradient(90deg, #b96c70, #d3c0cc); }
.tray { display: flex; align-items: center; gap: 8px; margin-left: auto; color: #fff; }
.lang { margin-right: 8px; }
.clock { width: 62px; margin-left: 6px; line-height: 17px; text-align: center; }
.show-desktop { align-self: stretch; width: 14px; border: 1px solid #4d5a6b; background: linear-gradient(#a5b1c0, #66758a); }
```
